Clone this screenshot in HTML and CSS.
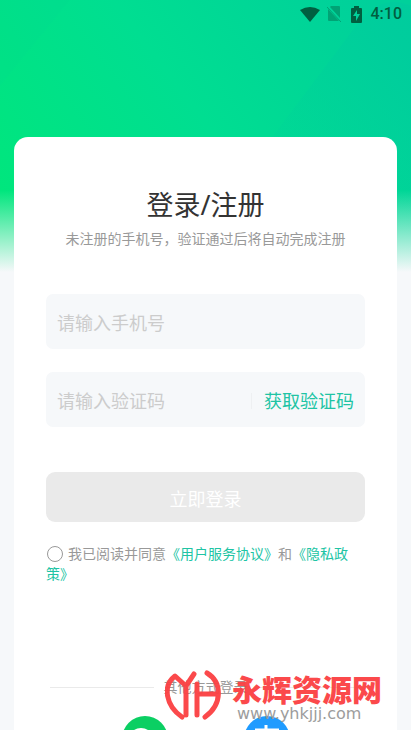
FILE: index.html
```html
<!DOCTYPE html>
<html lang="zh-CN">
<head>
<meta charset="utf-8">
<meta name="viewport" content="width=device-width, initial-scale=1">
<title>登录/注册</title>
<link rel="stylesheet" href="styles.css">
</head>
<body>
<div class="screen">
  <svg class="backdrop" viewBox="0 0 411 272" preserveAspectRatio="none" aria-hidden="true">
    <defs>
      <linearGradient id="base" x1="0" y1="0.7" x2="1" y2="0.2">
        <stop offset="0" stop-color="#00e67d"/>
        <stop offset="0.5" stop-color="#00de91"/>
        <stop offset="1" stop-color="#00d09b"/>
      </linearGradient>
      <linearGradient id="band" x1="1" y1="0" x2="0.2" y2="1">
        <stop offset="0" stop-color="#00c8a0" stop-opacity="0.5"/>
        <stop offset="1" stop-color="#00d09a" stop-opacity="0.15"/>
      </linearGradient>
      <linearGradient id="fade" x1="0" y1="0" x2="0" y2="1">
        <stop offset="0.7" stop-color="#f6f8fa" stop-opacity="0"/>
        <stop offset="1" stop-color="#f6f8fa"/>
      </linearGradient>
    </defs>
    <rect width="411" height="272" fill="url(#base)"/>
    <path d="M270 140 L362 18 Q385 -6 411 6 V190 H270Z" fill="url(#band)"/>
    <path d="M0 86 L70 0 H0Z" fill="#00d890" opacity="0.12"/>
    <rect width="411" height="272" fill="url(#fade)"/>
  </svg>

  <header class="status">
    <svg class="wifi" viewBox="0 0 20 16" aria-hidden="true"><path d="M0 4Q10 -2 20 4L10 16Z"/></svg>
    <svg class="sim" viewBox="0 0 14 16" aria-hidden="true"><path d="M4 0H12Q13 0 13 1V12L3 1ZM1 3L12 15H2Q1 15 1 14Z"/><path d="M0 1L14 16" class="slash"/></svg>
    <svg class="battery" viewBox="0 0 11 17" aria-hidden="true"><path fill-rule="evenodd" d="M3 0H8V2H10Q11 2 11 3V16Q11 17 10 17H1Q0 17 0 16V3Q0 2 1 2H3ZM6 4L2 10H5V15L9 8H6Z"/></svg>
    <time>4:10</time>
  </header>

  <main class="card">
    <h1>登录/注册</h1>
    <p class="hint">未注册的手机号，验证通过后将自动完成注册</p>
    <form>
      <div class="field">
        <input type="tel" aria-label="手机号" placeholder="请输入手机号">
      </div>
      <div class="field">
        <input type="text" aria-label="验证码" placeholder="请输入验证码">
        <button type="button" class="code">获取验证码</button>
      </div>
      <button type="submit" class="submit" disabled>立即登录</button>
      <div class="terms">
        <input type="checkbox" id="agree"><label for="agree">我已阅读并同意</label><a href="#service">《用户服务协议》</a>和<a href="#privacy">《隐私政策》</a>
      </div>
    </form>
    <div class="divider"><span>其他方式登录</span></div>
    <div class="social">
      <a href="#wechat" aria-label="微信登录"><svg viewBox="0 0 46 46" aria-hidden="true"><circle cx="23" cy="23" r="23" fill="#0bcf63"/><ellipse cx="19" cy="21" rx="11" ry="9" fill="#fff"/></svg></a>
      <a href="#alipay" aria-label="支付宝登录"><svg viewBox="0 0 46 46" aria-hidden="true"><circle cx="23" cy="23" r="23" fill="#1f9bff"/><path d="M11 14H35M22 9V22" stroke="#fff" stroke-width="3"/></svg></a>
    </div>
  </main>

  <aside class="watermark">
    <svg viewBox="0 0 56 50" aria-hidden="true"><path d="M17 47C1 36 -3 16 10 6L21 16L29 4M21 16V45M32 14V45M32 24H53M42 3C57 12 58 34 40 47"/></svg>
    <div class="brand"><strong>永辉资源网</strong><span>www.yhkjjj.com</span></div>
  </aside>
</div>
</body>
</html>
```
FILE: styles.css
```css
* { box-sizing: border-box; }
body {
  margin: 0;
  background: #f6f8fa;
  font-family: "Noto Sans", "Noto Sans CJK SC", sans-serif;
  color: #333;
}
button, input { font: inherit; }
a { color: #20c4a4; text-decoration: none; }
.screen {
  position: relative;
  height: 100vh;
  overflow: hidden;
  display: flex;
  flex-direction: column;
}
.backdrop { position: absolute; top: 0; left: 0; width: 100%; height: 272px; }
.status {
  position: relative;
  display: flex;
  flex: none;
  align-items: center;
  justify-content: flex-end;
  height: 28px;
  padding-right: 9px;
  fill: #005f40;
  color: #005f40;
}
.wifi { width: 20px; height: 16px; margin-right: 7px; }
.sim { width: 14px; height: 16px; margin-right: 10px; opacity: 0.4; }
.slash { stroke: #005f40; stroke-width: 1; }
.battery { width: 11px; height: 17px; margin-right: 9px; }
.status time { font: 500 16px/28px Roboto, sans-serif; }
.card {
  position: relative;
  flex: 1 0 auto;
  margin: 109px 14px 0;
  padding: 48px 32px 0;
  border-radius: 14px 14px 0 0;
  background: #fff;
}
h1 { margin: 0; font-size: 27px; line-height: 40px; font-weight: 400; text-align: center; }
.hint { margin: 4px 0 0; font-size: 14px; line-height: 20px; color: #999; text-align: center; white-space: nowrap; }
.field {
  display: flex;
  align-items: center;
  height: 55px;
  padding: 2px 11px 0;
  border-radius: 7px;
  background: #f6f8fa;
}
form { padding-top: 45px; }
.field + .field { margin-top: 23px; }
.field input { flex: 1; min-width: 0; padding: 0; border: 0; outline: 0; background: none; font-size: 18px; color: #333; }
.field input::placeholder { color: #ccc; opacity: 1; }
.code { padding: 0 0 0 12px; border: 0; border-left: 1px solid #eef0f2; background: none; color: #20c4a4; font-size: 18px; line-height: 16px; }
.submit { display: block; width: 100%; height: 50px; margin-top: 45px; padding: 2px 0 0; border: 0; border-radius: 9px; background: #eaeaea; color: #fff; font-size: 18px; }
.terms { margin-top: 22px; font-size: 14px; line-height: 20px; color: #999; }
.terms input { appearance: none; width: 16px; height: 16px; margin: 0 5px 0 1px; border: 1px solid #999; border-radius: 50%; vertical-align: -3px; }
.divider { display: flex; align-items: center; gap: 10px; margin-top: 93px; padding: 0 4px; font-size: 14px; line-height: 20px; color: #999; }
.divider::before, .divider::after { content: ""; flex: 1; height: 1px; background: #eaeaea; }
.social { display: flex; justify-content: center; gap: 76px; height: 32px; margin-top: 19px; }
.social svg { display: block; width: 46px; height: 46px; }
.watermark { position: absolute; right: 29px; bottom: 8px; display: flex; align-items: flex-start; gap: 11px; opacity: 0.96; }
.watermark svg { width: 56px; height: 50px; fill: none; stroke: #fb4244; stroke-width: 5; stroke-linecap: round; stroke-linejoin: round; }
.brand { display: flex; flex-direction: column; padding-top: 4px; }
.brand strong { font-size: 30px; line-height: 32px; font-weight: 900; color: #fb4244; }
.brand span { padding-left: 5px; font: 16px/16px "DejaVu Sans", sans-serif; color: #999; }
```
